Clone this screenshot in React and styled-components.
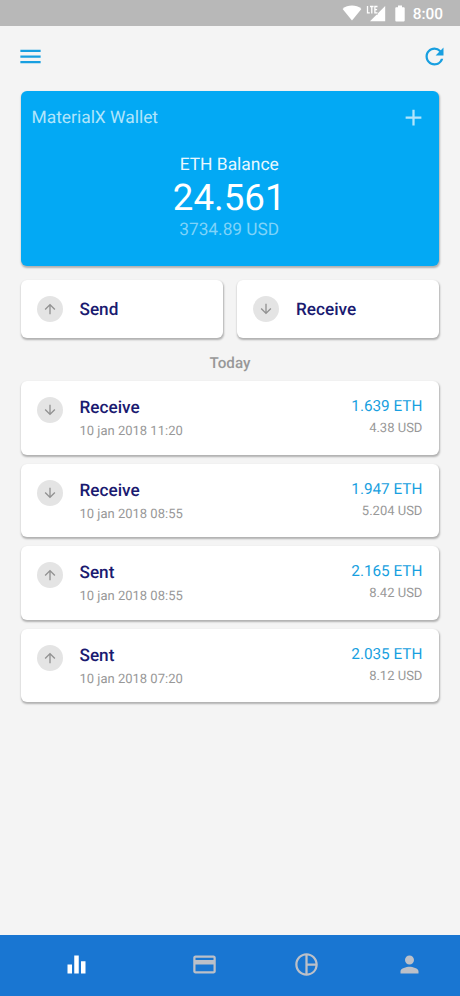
import React from "react";
import styled, { createGlobalStyle, css } from "styled-components";
import {
  MdAdd,
  MdArrowDownward,
  MdArrowUpward,
  MdEqualizer,
  MdMenu,
  MdOutlinePieChart,
  MdPerson,
  MdRefresh
} from "react-icons/md";

const colors = {
  background: "#f4f4f4",
  primary: "#03a9f4",
  accent: "#189fe0",
  navy: "#1a1a70",
  nav: "#1976d2",
  gray: "#989898"
};

const GlobalStyle = createGlobalStyle`
  * {
    box-sizing: border-box;
  }
  body {
    margin: 0;
    background: ${colors.background};
    font-family: Roboto, sans-serif;
    text-rendering: geometricPrecision;
  }
  svg {
    display: block;
    flex-shrink: 0;
  }
`;

const Screen = styled.div`
  width: 460px;
  height: 996px;
  display: flex;
  flex-direction: column;
  overflow: hidden;
  background: ${colors.background};
`;

const StatusBarBlock = styled.div`
  height: 26px;
  flex-shrink: 0;
  display: flex;
  align-items: center;
  justify-content: flex-end;
  padding-right: 17px;
  background: #b8b8b8;
  color: white;
  .battery {
    margin: 0 8px 0 9px;
  }
  .signal {
    margin-left: 4px;
  }
`;

const Clock = styled.span`
  font-size: 15.4px;
  font-weight: 500;
  line-height: 20px;
  padding-top: 2px;
`;

const Header = styled.header`
  height: 65px;
  flex-shrink: 0;
  display: flex;
  align-items: center;
  justify-content: space-between;
  padding: 0 12.5px 4px 17px;
  font-size: 27px;
  color: ${colors.accent};
`;

const Content = styled.main`
  flex: 1;
  padding: 0 20.6px 0 20.5px;
`;

const Card = styled.div`
  border-radius: 6px;
  background: white;
  box-shadow: 0.5px 1.5px 2px rgba(0, 0, 0, 0.28);
`;

const BalanceCard = styled(Card)`
  height: 174.7px;
  padding: 12px 12.5px 0 11px;
  background: ${colors.primary};
`;

const BalanceHead = styled.div`
  height: 28px;
  display: flex;
  align-items: center;
  justify-content: space-between;
  font-size: 17.4px;
  color: #b1e5fb;
  span {
    padding-top: 1px;
  }
  svg {
    font-size: 27px;
  }
`;

const Balance = styled.div`
  display: flex;
  flex-direction: column;
  align-items: center;
  margin-top: 22.5px;
  color: white;
  .label {
    font-size: 17.4px;
    line-height: 22px;
    color: #e9f8fe;
  }
  .amount {
    font-size: 36.7px;
    line-height: 44px;
  }
  .fiat {
    font-size: 17.3px;
    line-height: 19px;
    padding-top: 1px;
    color: #7ed3f9;
  }
`;

const Actions = styled.div`
  display: grid;
  grid-template-columns: 1fr 1fr;
  gap: 14px;
  margin-top: 14.3px;
`;

const Title = styled.div`
  font-size: 17.2px;
  font-weight: 500;
  line-height: 22px;
  color: ${colors.navy};
`;

const ActionCard = styled(Card)`
  height: 58.5px;
  display: flex;
  align-items: center;
  padding-left: 16.5px;
  ${Title} {
    padding-top: 1px;
  }
`;

const Direction = styled.div`
  width: 26px;
  height: 26px;
  flex-shrink: 0;
  display: flex;
  align-items: center;
  justify-content: center;
  margin-right: 16.5px;
  border-radius: 50%;
  background: #e4e4e4;
  color: #929292;
  font-size: 16px;
`;

const DayLabel = styled.div`
  height: 42.5px;
  padding-top: 7px;
  line-height: 36px;
  text-align: center;
  font-size: 15.2px;
  font-weight: 500;
  color: ${colors.gray};
`;

const TransactionList = styled.div`
  display: flex;
  flex-direction: column;
  gap: 9px;
`;

const TransactionCard = styled(Card)`
  height: 73.6px;
  display: flex;
  padding: 16px 17px 0 16.5px;
`;

const Details = styled.div`
  flex: 1;
  .date {
    font-size: 13px;
    line-height: 18px;
    margin-top: 4px;
    color: ${colors.gray};
  }
`;

const Amounts = styled.div`
  margin-top: -0.8px;
  text-align: right;
  .eth {
    font-size: 15.3px;
    line-height: 20px;
    color: ${colors.accent};
  }
  .usd {
    font-size: 13px;
    line-height: 18px;
    margin-top: 3.8px;
    color: ${colors.gray};
  }
`;

const NavBar = styled.nav`
  height: 61px;
  flex-shrink: 0;
  display: flex;
  background: ${colors.nav};
`;

const NavItem = styled.div`
  flex: 1;
  display: flex;
  align-items: center;
  justify-content: center;
  padding: 0 0 1.4px 0.6px;
  font-size: 27px;
  color: #bcc0c8;
  ${props =>
    props.$active &&
    css`
      flex: 1.5;
      color: white;
    `}
`;

const transactions = [
  { id: 1, type: "receive", date: "10 jan 2018 11:20", eth: "1.639", usd: "4.38" },
  { id: 2, type: "receive", date: "10 jan 2018 08:55", eth: "1.947", usd: "5.204" },
  { id: 3, type: "sent", date: "10 jan 2018 08:55", eth: "2.165", usd: "8.42" },
  { id: 4, type: "sent", date: "10 jan 2018 07:20", eth: "2.035", usd: "8.12" }
];

const StatusBar = () => (
  <StatusBarBlock>
    <svg width="20" height="16" viewBox="0 0 20 16" fill="currentColor">
      <path d="M10 15.5L.6 3.9C3.300 1.700 6.500.6 10 .6s6.700 1.100 9.400 3.300z" />
    </svg>
    <svg className="signal" width="20" height="17" viewBox="0 0 20 17" fill="currentColor">
      <path d="M19.200 1v15.200H4z" />
      <path d="M0 0h12v9.500H0z" fill="#b8b8b8" />
      <path d="M1.500 1v6.900h2.300M4 1.500h3.600M5.800 1.500V8.400M11.500 1.500H8.900v6.400h2.600M8.900 4.700h2.200" fill="none" stroke="currentColor" strokeWidth="1.300" />
    </svg>
    <svg className="battery" width="10" height="17" viewBox="0 0 10 17" fill="currentColor">
      <path d="M3 .5h4v1.700h1.800c.5 0 .9.400.9.900v12.500c0 .5-.4.900-.9.900H1.200c-.5 0-.9-.4-.9-.9V3.100c0-.5.400-.9.900-.9H3z" />
    </svg>
    <Clock>8:00</Clock>
  </StatusBarBlock>
);

const DirectionIcon = ({ type }) => (
  <Direction>{type === "receive" ? <MdArrowDownward /> : <MdArrowUpward />}</Direction>
);

const CardIcon = () => (
  <svg width="27" height="27" viewBox="0 0 24 24" fill="currentColor">
    <path d="M20 4H4c-1.110 0-1.990.890-1.990 2L2 18c0 1.110.890 2 2 2h16c1.110 0 2-.890 2-2V6c0-1.110-.890-2-2-2zm0 14H4v-6h16v6zm0-10H4V6h16v2z" />
  </svg>
);

const Transaction = ({ type, date, eth, usd }) => (
  <TransactionCard>
    <DirectionIcon type={type} />
    <Details>
      <Title>{type === "receive" ? "Receive" : "Sent"}</Title>
      <div className="date">{date}</div>
    </Details>
    <Amounts>
      <div className="eth">{eth} ETH</div>
      <div className="usd">{usd} USD</div>
    </Amounts>
  </TransactionCard>
);

const App = () => {
  return (
    <>
      <GlobalStyle />
      <Screen>
        <StatusBar />
        <Header>
          <MdMenu />
          <MdRefresh />
        </Header>
        <Content>
          <BalanceCard>
            <BalanceHead>
              <span>MaterialX Wallet</span>
              <MdAdd />
            </BalanceHead>
            <Balance>
              <div className="label">ETH Balance</div>
              <div className="amount">24.561</div>
              <div className="fiat">3734.89 USD</div>
            </Balance>
          </BalanceCard>
          <Actions>
            <ActionCard>
              <DirectionIcon type="send" />
              <Title>Send</Title>
            </ActionCard>
            <ActionCard>
              <DirectionIcon type="receive" />
              <Title>Receive</Title>
            </ActionCard>
          </Actions>
          <DayLabel>Today</DayLabel>
          <TransactionList>
            {transactions.map(item => (
              <Transaction key={item.id} {...item} />
            ))}
          </TransactionList>
        </Content>
        <NavBar>
          <NavItem $active>
            <MdEqualizer />
          </NavItem>
          <NavItem>
            <CardIcon />
          </NavItem>
          <NavItem>
            <MdOutlinePieChart />
          </NavItem>
          <NavItem>
            <MdPerson />
          </NavItem>
        </NavBar>
      </Screen>
    </>
  );
};

export default App;
